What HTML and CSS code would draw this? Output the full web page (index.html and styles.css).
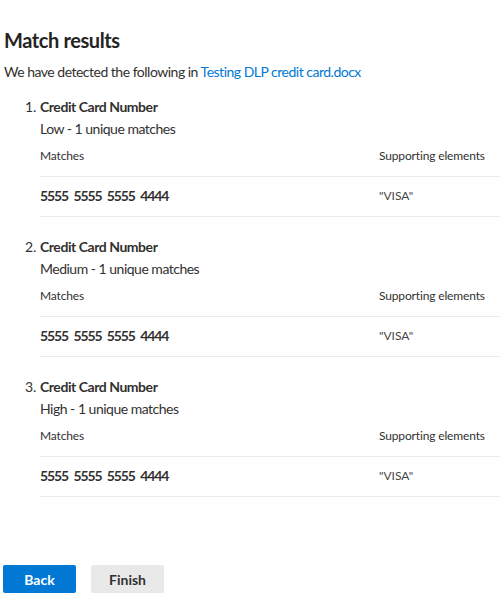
FILE: index.html
```html
<!DOCTYPE html>
<html lang="en">
<head>
<meta charset="utf-8">
<title>Match results</title>
<link rel="stylesheet" href="styles.css">
</head>
<body>
<main class="page">
  <h1 class="heading">Match results</h1>
  <p class="intro">We have detected the following in <a class="file-link" href="#">Testing DLP credit card.docx</a></p>
  <ol class="results">
    <li class="result">
      <div class="result-title">Credit Card Number</div>
      <div class="result-conf">Low - 1 unique matches</div>
      <div class="match-table">
        <div class="match-row match-head"><span>Matches</span><span>Supporting elements</span></div>
        <div class="match-row"><span class="match-num">5555 5555 5555 4444</span><span class="match-sup">"VISA"</span></div>
      </div>
    </li>
    <li class="result">
      <div class="result-title">Credit Card Number</div>
      <div class="result-conf">Medium - 1 unique matches</div>
      <div class="match-table">
        <div class="match-row match-head"><span>Matches</span><span>Supporting elements</span></div>
        <div class="match-row"><span class="match-num">5555 5555 5555 4444</span><span class="match-sup">"VISA"</span></div>
      </div>
    </li>
    <li class="result">
      <div class="result-title">Credit Card Number</div>
      <div class="result-conf">High - 1 unique matches</div>
      <div class="match-table">
        <div class="match-row match-head"><span>Matches</span><span>Supporting elements</span></div>
        <div class="match-row"><span class="match-num">5555 5555 5555 4444</span><span class="match-sup">"VISA"</span></div>
      </div>
    </li>
  </ol>
  <div class="actions">
    <button class="btn btn-primary" type="button">Back</button>
    <button class="btn btn-default" type="button">Finish</button>
  </div>
</main>
</body>
</html>
```

FILE: styles.css
```css
* { box-sizing: border-box; }
html, body { margin: 0; padding: 0; background: #fff; }
body {
  font-family: "Segoe UI", Lato, "Noto Sans", sans-serif;
  color: #323130;
  font-size: 14px;
}
.page {
  padding: 26px 0 0 4px;
}
.heading {
  margin: 0;
  font-size: 20px;
  line-height: 28px;
  font-weight: 700;
  letter-spacing: -0.4px;
  color: #252423;
}
.intro {
  margin: 8px 0 0;
  font-size: 14px;
  line-height: 20px;
  letter-spacing: -0.5px;
}
.file-link {
  color: #0078d4;
  text-decoration: none;
}
.results {
  margin: 14px 0 0;
  padding: 0 0 0 36px;
}
.result {
  margin-bottom: 19px;
}
.result::marker {
  font-weight: 400;
}
.result-title {
  font-size: 14px;
  line-height: 22px;
  font-weight: 700;
  letter-spacing: -0.45px;
}
.result-conf {
  font-size: 14px;
  line-height: 22px;
  letter-spacing: -0.5px;
}
.match-table {
  display: grid;
}
.match-row {
  display: grid;
  grid-template-columns: 339px 1fr;
  border-bottom: 1px solid #edebe9;
  align-items: center;
}
.match-head {
  padding: 6px 0 10px;
  font-size: 12px;
  line-height: 20px;
  letter-spacing: -0.15px;
}
.match-row:not(.match-head) {
  padding: 9px 0 10px;
  line-height: 20px;
}
.match-num {
  font-size: 14px;
  font-weight: 700;
  letter-spacing: -1.1px;
  word-spacing: 3px;
}
.match-sup {
  font-size: 12px;
  color: #484644;
}
.actions {
  display: flex;
  gap: 15px;
  margin: 68px 0 0 -1px;
}
.btn {
  font-family: inherit;
  width: 73px;
  height: 28px;
  border: none;
  border-radius: 2px;
  font-size: 14px;
  font-weight: 700;
  padding: 0;
  cursor: pointer;
}
.btn-primary {
  background: #0078d4;
  color: #fff;
}
.btn-default {
  background: #e9e9e9;
  color: #323130;
}
```
